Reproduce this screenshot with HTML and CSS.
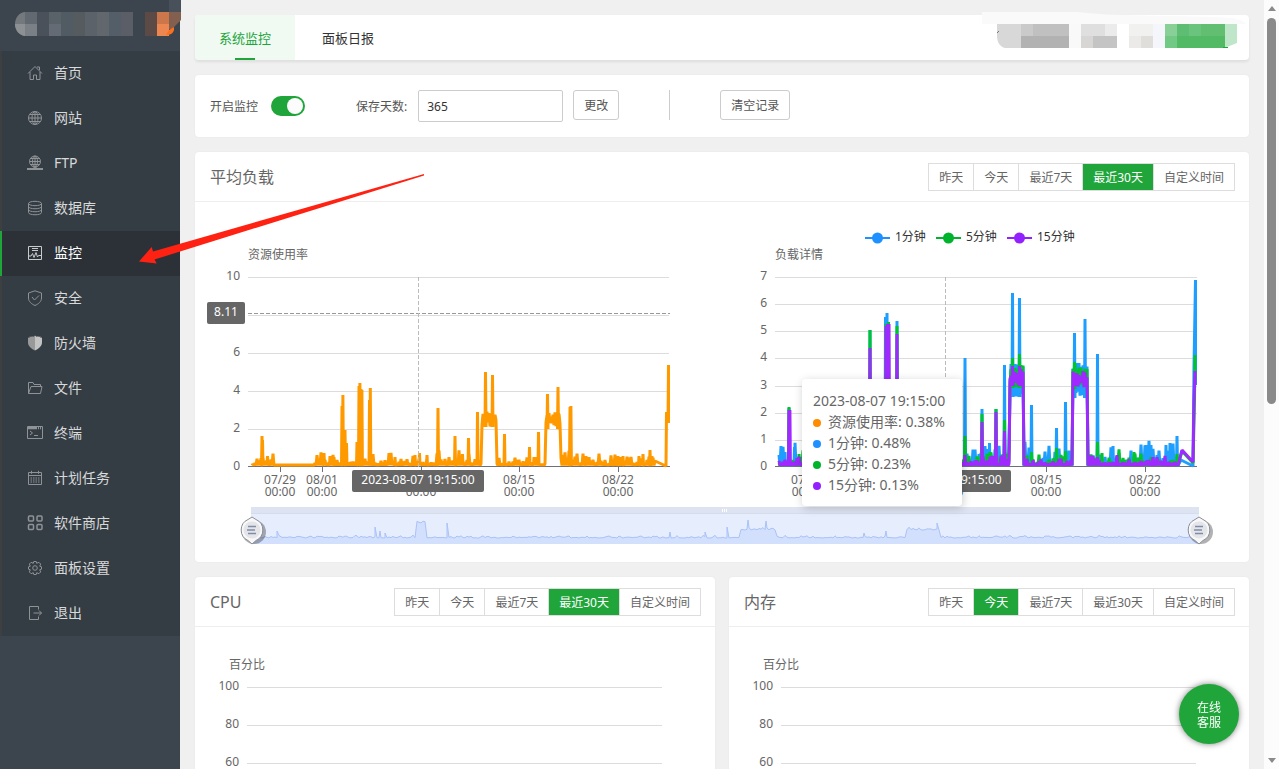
FILE: index.html
```
<!DOCTYPE html>
<html lang="zh-CN">
<head>
    <meta charset="UTF-8">
    <meta name="viewport" content="width=device-width, initial-scale=1.0">
    <title>监控</title>
    <link rel="stylesheet" href="styles.css">
</head>
<body>
    <aside class="sidebar">
        <div class="brand">
            <svg width="181" height="50" viewBox="0 0 181 50">
                <path d="M25 12h8v24h-8c-5 0-10-5-10-12s5-12 10-12z" fill="#74797d"/>
                <path d="M15 24h10v12c-6-1-10-6-10-12z" fill="#8e9193"/>
                <rect x="25" y="12" width="12" height="12" fill="#626970"/>
                <rect x="25" y="24" width="12" height="12" fill="#7b7f86"/>
                <rect x="37" y="12" width="12" height="24" fill="#4a515a"/>
                <rect x="49" y="12" width="12" height="12" fill="#596169"/>
                <rect x="49" y="24" width="12" height="12" fill="#656b74"/>
                <rect x="61" y="12" width="12" height="24" fill="#505b63"/>
                <rect x="73" y="12" width="12" height="24" fill="#555b5e"/>
                <rect x="85" y="12" width="12" height="24" fill="#5b626a"/>
                <rect x="97" y="12" width="12" height="24" fill="#62666d"/>
                <rect x="109" y="12" width="12" height="24" fill="#535e68"/>
                <rect x="121" y="12" width="12" height="24" fill="#5b5d67"/>
                <rect x="145" y="12" width="12" height="24" fill="#5c4a46"/>
                <rect x="157" y="12" width="12" height="12" fill="#cb764b"/>
                <rect x="157" y="24" width="12" height="12" fill="#ec8752"/>
                <path d="M169 0h12v12h-12z" fill="#485059"/>
                <path d="M169 12h12v8l-9 9h-3z" fill="#835f4f"/>
                <path d="M169 30l5-3v3q-1 5-8 5z" fill="#f9701f"/>
            </svg>
        </div>
        <nav class="menu">
            <a class="menu-item" href="#"><svg class="icon" viewBox="0 0 16 16"><path d="M1 8.500L8 1.500l7 7M3 7v7.500h3.500V10h3v4.500H13V7M10 2h2.500v3"/></svg>首页</a>
            <a class="menu-item" href="#"><svg class="icon" viewBox="0 0 16 16"><circle cx="8" cy="8" r="6.500"/><ellipse cx="8" cy="8" rx="3" ry="6.500"/><path d="M8 1.500v13M1.500 8h13M2.500 4.500h11M2.500 11.500h11"/></svg>网站</a>
            <a class="menu-item" href="#"><svg class="icon" viewBox="0 0 16 16"><circle cx="8" cy="6.500" r="5.500"/><ellipse cx="8" cy="6.500" rx="2.500" ry="5.500"/><path d="M8 1v13M2.500 6.500h11M3.500 3.500h9M3.500 9.500h9"/><path d="M0 14h16M6 13.500h4" stroke-width="2"/></svg>FTP</a>
            <a class="menu-item" href="#"><svg class="icon" viewBox="0 0 16 16"><ellipse cx="8" cy="3.500" rx="6.500" ry="2.200"/><path d="M1.500 3.500v9c0 3 13 3 13 0v-9M1.500 6.500c0 3 13 3 13 0M1.500 9.500c0 3 13 3 13 0"/></svg>数据库</a>
            <a class="menu-item active" href="#"><svg class="icon" viewBox="0 0 16 16"><path d="M1.500 1.500h13v13h-13zM1.500 11h2.500l1.500-2.500L7 12.500l2-5 1.500 4.500 1-1.500h3M5 3.500h6M5 5.500h6"/></svg>监控</a>
            <a class="menu-item" href="#"><svg class="icon" viewBox="0 0 16 16"><path d="M8 .8l6.500 2.200v5c0 3.500-3 6-6.500 7.500C4.500 14 1.500 11.500 1.500 8V3zM5 7l2.500 3L12 5.500"/></svg>安全</a>
            <a class="menu-item" href="#"><svg class="icon" viewBox="0 0 16 16"><path class="dark" d="M8 .5v15C4 13.500 1 11 1 7.500V2.500L2.500 3V1.500l2 .5V1.200L6.500 1.700z"/><path class="light" d="M8 .5v15c4-2 7-4.500 7-8V2.500L13.500 3V1.500l-2 .5V1.200L9.500 1.700z"/></svg>防火墙</a>
            <a class="menu-item" href="#"><svg class="icon" viewBox="0 0 16 16"><path d="M1.500 13.500v-11h4.500l1 2h6.500v2M1.500 13.500l2.500-7h11l-1.500 7z"/></svg>文件</a>
            <a class="menu-item" href="#"><svg class="icon" viewBox="0 0 16 16"><path d="M.5 1.500h15v12H.5zM3 6l2.500 2L3 10M7 10.500h4"/><path d="M1 3h14" stroke-width="2.500" stroke-dasharray="9 1 1 1 1 1"/></svg>终端</a>
            <a class="menu-item" href="#"><svg class="icon" viewBox="0 0 16 16"><path d="M1.500 2.500h13v12h-13zM1.500 5.500h13M4.500.8v3M11.500.8v3"/><path d="M3.500 8h9M3.500 10h9M3.500 12h9" stroke-dasharray="1.500 1"/></svg>计划任务</a>
            <a class="menu-item" href="#"><svg class="icon thick" viewBox="0 0 16 16"><rect x="1.500" y="1" width="5" height="5" rx="1"/><rect x="10" y="1" width="5" height="5" rx="1"/><rect x="1.500" y="9.500" width="5" height="5" rx="1"/><rect x="10" y="9.500" width="5" height="5" rx="1"/></svg>软件商店</a>
            <a class="menu-item" href="#"><svg class="icon" viewBox="0 0 16 16"><path d="M6.800 1.500h2.400l.5 1.800 2.200-1 1.800 1.800-1 2.100 1.800.6v2.400l-1.800.6 1 2.100-1.800 1.800-2.200-1-.5 1.800H6.800l-.5-1.800-2.200 1-1.800-1.800 1-2.100-1.800-.6V6.800l1.800-.6-1-2.100 1.800-1.800 2.200 1z"/><circle cx="8" cy="8" r="2.300"/></svg>面板设置</a>
            <a class="menu-item" href="#"><svg class="icon" viewBox="0 0 16 16"><path d="M11.500 4.500v-3h-9v13h9v-3M6.500 8h8M12 5.500L14.500 8 12 10.500"/></svg>退出</a>
        </nav>
    </aside>

    <main class="main">
        <div class="card tabs">
            <button class="tab active">系统监控</button>
            <button class="tab">面板日报</button>
            <svg class="account" width="268" height="48" viewBox="981 12 268 48">
                <path d="M982 12h95c40 5 110 3 155 6q12 2 14 6H982z" fill="#fafafa"/>
                <path d="M997 24h24v24h-16c-5-1-8-6-8-12z" fill="#d8d8d8"/>
                <rect x="1021" y="24" width="12" height="12" fill="#cacaca"/>
                <rect x="1033" y="24" width="36" height="12" fill="#c0c0c0"/>
                <rect x="1021" y="36" width="48" height="12" fill="#b2b2b2"/>
                <path d="M997 33l2-2" stroke="#777"/>
                <rect x="1069" y="24" width="12" height="24" fill="#f9f9f9"/>
                <rect x="1081" y="24" width="24" height="12" fill="#dfdfdf"/>
                <rect x="1105" y="24" width="12" height="12" fill="#ebebeb"/>
                <rect x="1081" y="36" width="12" height="12" fill="#d8d6d4"/>
                <rect x="1093" y="36" width="24" height="12" fill="#c4c4c4"/>
                <rect x="1129" y="24" width="24" height="12" fill="#f1f1f0"/>
                <rect x="1129" y="36" width="12" height="12" fill="#eceae8"/>
                <rect x="1141" y="36" width="12" height="12" fill="#e0deda"/>
                <rect x="1153" y="24" width="12" height="24" fill="#f4f6fb"/>
                <rect x="1165" y="24" width="12" height="12" fill="#88d098"/>
                <rect x="1165" y="36" width="12" height="12" fill="#72c986"/>
                <rect x="1177" y="24" width="12" height="12" fill="#5dbe73"/>
                <rect x="1189" y="24" width="12" height="12" fill="#6bc47e"/>
                <rect x="1201" y="24" width="24" height="12" fill="#62bf72"/>
                <rect x="1177" y="36" width="48" height="12" fill="#52b965"/>
                <path d="M1225 24h12v19l-10 4h-2z" fill="#bfe6c8"/>
                <path d="M1223 47.500h5" stroke="#20a53a"/>
            </svg>
        </div>

        <div class="card toolbar">
            <label class="text" for="monitor-on">开启监控</label>
            <input class="switch" type="checkbox" id="monitor-on" checked>
            <label class="text days-label" for="days">保存天数:</label>
            <input class="days" type="text" id="days" value="365">
            <button class="btn">更改</button>
            <span class="divider"></span>
            <button class="btn">清空记录</button>
        </div>

        <section class="card">
            <header class="card-head">
                <h2>平均负载</h2>
                <div class="period">
                    <button>昨天</button>
                    <button>今天</button>
                    <button>最近7天</button>
                    <button class="active">最近30天</button>
                    <button>自定义时间</button>
                </div>
            </header>
            <div class="chart-wrap">
                <svg class="chart" id="load-chart" viewBox="195 202 1054 360"></svg>
                <div class="tooltip">
                    <div>2023-08-07 19:15:00</div>
                    <div><i class="dot orange"></i>资源使用率: 0.38%</div>
                    <div><i class="dot blue"></i>1分钟: 0.48%</div>
                    <div><i class="dot green"></i>5分钟: 0.23%</div>
                    <div><i class="dot purple"></i>15分钟: 0.13%</div>
                </div>
            </div>
        </section>

        <div class="row">
            <section class="card">
                <header class="card-head">
                    <h2>CPU</h2>
                    <div class="period">
                        <button>昨天</button>
                        <button>今天</button>
                        <button>最近7天</button>
                        <button class="active">最近30天</button>
                        <button>自定义时间</button>
                    </div>
                </header>
                <svg class="chart" id="cpu-chart" viewBox="195 627 520 280"></svg>
            </section>
            <section class="card">
                <header class="card-head">
                    <h2>内存</h2>
                    <div class="period">
                        <button>昨天</button>
                        <button class="active">今天</button>
                        <button>最近7天</button>
                        <button>最近30天</button>
                        <button>自定义时间</button>
                    </div>
                </header>
                <svg class="chart" id="mem-chart" viewBox="729 627 520 280"></svg>
            </section>
        </div>
    </main>

    <div class="scrollbar">
        <span class="arrow up"></span>
        <span class="thumb"></span>
        <span class="arrow down"></span>
    </div>

    <button class="service">在线<br>客服</button>

    <svg class="pointer" width="290" height="94" viewBox="137 172 290 94">
        <path d="M424 174L153 251.500l-1.300-4.500L139 261.500l17.700 2-2.200-4L424 175.500z" fill="#ff2213"/>
    </svg>

    <script src="charts.js"></script>
</body>
</html>
```

FILE: styles.css
```
* {
    box-sizing: border-box;
}
body {
    display: flex;
    height: 100vh;
    margin: 0;
    overflow: hidden;
    background: #f0f0f0;
    color: #555;
    font-family: "Noto Sans", "Noto Sans CJK SC", sans-serif;
    font-size: 12px;
}
button,
input {
    font: inherit;
    color: inherit;
}
button {
    cursor: pointer;
}

/* sidebar */
.sidebar {
    flex: 0 0 180px;
    min-width: 0;
    background: #3c444d;
}
.brand {
    height: 51px;
}
.brand svg {
    display: block;
}
.menu {
    background: #353d44;
}
.menu-item {
    display: flex;
    align-items: center;
    gap: 11px;
    height: 45px;
    padding-left: 25px;
    padding-bottom: 3px;
    border-left: 2px solid #3d3f40;
    color: #d8d9da;
    font-size: 14px;
    text-decoration: none;
}
.menu-item.active {
    background: #2c3138;
    border-left-color: #20a53a;
    color: #fff;
}
.icon {
    width: 16px;
    height: 16px;
    margin-top: 2px;
    fill: none;
    stroke: #8f9396;
    stroke-width: 1;
}
.icon.thick {
    stroke-width: 1.5;
}
.icon .dark {
    fill: #999;
    stroke: none;
}
.icon .light {
    fill: #c3c3c3;
    stroke: none;
}
.active .icon {
    stroke: #c8cacc;
}

/* content */
.main {
    flex: 1;
    display: flex;
    flex-direction: column;
    gap: 15px;
    min-width: 0;
    padding: 15px;
}
.card {
    flex: 1;
    background: #fff;
    border-radius: 4px;
    box-shadow: 0 0 2px rgba(0, 0, 0, 0.06);
}
.main > .card {
    flex: none;
}
.row {
    display: flex;
    gap: 14px;
}

.tabs {
    display: flex;
    align-items: flex-end;
    gap: 3px;
    height: 45px;
    box-shadow: 0 2px 3px rgba(0, 0, 0, 0.08);
}
.tab {
    position: relative;
    height: 45px;
    padding: 0 24px;
    border: none;
    border-radius: 4px 0 0 4px;
    background: none;
    color: #333;
    font-size: 13px;
}
.tab.active {
    background: #f0f9f2;
    color: #20a53a;
}
.tab.active::after {
    content: "";
    position: absolute;
    left: 40px;
    bottom: 0;
    width: 20px;
    height: 2px;
    background: #20a53a;
}
.account {
    margin-left: auto;
}

.toolbar {
    display: flex;
    align-items: flex-start;
    height: 62px;
    padding: 15px;
}
.text {
    line-height: 34px;
}
.switch {
    appearance: none;
    width: 34px;
    height: 20px;
    margin: 6px 51px 0 13px;
    padding: 2px;
    border-radius: 10px;
    background: #20a53a;
}
.switch::before {
    content: "";
    display: block;
    width: 16px;
    height: 16px;
    margin-left: 14px;
    border-radius: 50%;
    background: #fcfcfc;
}
.days-label {
    margin-right: 11px;
}
.days {
    width: 145px;
    height: 32px;
    margin-right: 10px;
    padding: 0 8px;
    border: 1px solid #ccc;
    border-radius: 2px;
    color: #333;
}
.btn {
    height: 30px;
    padding: 0 10px;
    border: 1px solid #ccc;
    border-radius: 3px;
    background: #fff;
}
.divider {
    width: 1px;
    height: 30px;
    margin: 0 50px;
    background: #ccc;
}

.card-head {
    display: flex;
    align-items: flex-start;
    justify-content: space-between;
    height: 50px;
    padding: 0 14px 0 15px;
    border-bottom: 1px solid #eee;
}
h2 {
    margin: 0;
    color: #666;
    font-size: 16px;
    font-weight: normal;
    line-height: 50px;
}
.period {
    display: flex;
    margin-top: 11px;
    border: 1px solid #ddd;
}
.period button {
    height: 26px;
    padding: 0 10px;
    border: none;
    border-right: 1px solid #ddd;
    background: #fff;
    color: #666;
}
.period button:last-child {
    border-right: none;
}
.period .active {
    background: #20a53a;
    color: #fff;
}

/* charts */
.chart-wrap {
    position: relative;
}
.chart {
    display: block;
    width: 100%;
    fill: #666;
    font-size: 12px;
}
.grid {
    stroke: #dcdcdc;
}
.axis {
    stroke: #6e7079;
}
.cross {
    stroke: #999;
    stroke-dasharray: 4 2;
}
.cross.light {
    stroke: #bbb;
}
.line {
    fill: none;
    stroke-width: 3;
    stroke-linejoin: bevel;
}
.badge {
    fill: #666;
}
.badge-text {
    fill: #fff;
}
.legend-text {
    fill: #333;
}
.tooltip {
    position: absolute;
    left: 607px;
    top: 177px;
    width: 160px;
    padding: 11px;
    border-radius: 4px;
    background: #fff;
    box-shadow: 1px 2px 10px rgba(0, 0, 0, 0.2);
    color: #666;
    font-size: 14px;
    line-height: 21px;
    white-space: nowrap;
}
.dot {
    display: inline-block;
    width: 8px;
    height: 8px;
    margin-right: 7px;
    border-radius: 50%;
}
.dot.orange {
    background: #ff8c00;
}
.dot.blue {
    background: #1e90ff;
}
.dot.green {
    background: #00b32d;
}
.dot.purple {
    background: #9321ff;
}

/* window scrollbar */
.scrollbar {
    flex: 0 0 15px;
    display: flex;
    flex-direction: column;
    align-items: center;
    padding: 6px 0;
    background: #fcfcfc;
}
.arrow {
    border: 4px solid transparent;
}
.arrow.up {
    border-top: none;
    border-bottom: 5px solid #8a8a8a;
}
.arrow.down {
    margin-top: auto;
    border-bottom: none;
    border-top: 5px solid #8a8a8a;
}
.thumb {
    width: 9px;
    height: 51%;
    margin-top: 7px;
    border-radius: 5px;
    background: #8a8a8a;
}

.service {
    position: fixed;
    right: 40px;
    bottom: 25px;
    width: 60px;
    height: 60px;
    padding: 2px 0 0;
    border: none;
    border-radius: 50%;
    background: #20a53a;
    box-shadow: 0 0 6px rgba(0, 0, 0, 0.5);
    color: #fff;
    line-height: 15px;
}
.pointer {
    position: absolute;
    left: 137px;
    top: 172px;
    pointer-events: none;
}
```

FILE: charts.js
```
let seed = 7;
function random() {
    seed = (seed * 16807) % 2147483647;
    return seed / 2147483647;
}

function line(x1, y1, x2, y2, cls) {
    return `<line class="${cls}" x1="${x1}" y1="${y1}" x2="${x2}" y2="${y2}"/>`;
}

function text(x, y, str, anchor = "middle", cls = "") {
    return `<text class="${cls}" x="${x}" y="${y}" text-anchor="${anchor}">${str}</text>`;
}

function badge(x, y, width, str) {
    return `<rect class="badge" x="${x}" y="${y}" width="${width}" height="22" rx="2"/>` +
        text(x + width / 2, y + 14, str, "middle", "badge-text");
}

// peaks: [x, y], blocks: [from, to, top, bottom], quiet: [from, to]
function series(s, color) {
    const points = [];
    const base = 465;
    for (let x = s.from; x < s.to; x += 1) {
        const block = s.blocks.find(b => x >= b[0] && x <= b[1]);
        if (block) {
            const y = x % 2 ? block[2] + random() * 7 : block[3] - random() * 7;
            points.push([x, y]);
        } else if (s.quiet && x > s.quiet[0] && x < s.quiet[1]) {
            points.push([x, base]);
        } else {
            points.push([x, x % 2 ? base - random() * random() * s.noise - 1 : base + 0.5]);
        }
        s.peaks.filter(p => p[0] >= x && p[0] < x + 1).forEach(p => {
            const foot = block ? block[3] : base;
            points.push([p[0] - 0.5, foot], [p[0], p[1]], [p[0] + 0.5, foot]);
        });
    }
    const d = points.concat(s.tail).map(p => p[0].toFixed(1) + " " + p[1].toFixed(1)).join("L");
    return `<path class="line" stroke="${color}" d="M${d}"/>`;
}

function timeAxis(left, right, shift) {
    let out = line(left, 466.5, right, 466.5, "axis");
    const ticks = [[280, "07/29"], [322, "08/01"], [421, "08/08"], [519, "08/15"], [618, "08/22"]];
    ticks.forEach(([x, day]) => {
        out += line(x + shift + 0.5, 467, x + shift + 0.5, 472, "axis");
        if (day !== "08/08") {
            out += text(x + shift, 484, day);
        }
        out += text(x + shift, 496, "00:00");
    });
    return out;
}

const usage = {
    from: 252, to: 655, noise: 14, quiet: [274, 314],
    peaks: [[262, 436], [262.5, 440], [267.5, 456], [324, 453], [330, 456], [334, 457], [342, 406], [342.9, 395], [345, 430], [346.5, 443],
        [357, 442], [359, 386], [359.9, 383], [361, 389], [361.9, 390], [369.5, 400], [370.3, 388], [395, 457], [415, 455], [419.5, 453],
        [427, 455], [438, 408], [455, 436], [462.5, 454], [468.5, 438], [477.5, 412], [485.5, 372], [492.5, 375], [504.5, 434],
        [529.5, 447], [534, 457], [538.5, 432], [547.5, 394], [558, 387], [570, 407], [570.9, 406], [586, 456], [618, 456], [623, 456],
        [639, 456], [643, 454], [650, 450], [652, 456]],
    blocks: [[482, 496, 410, 427], [546, 560, 410, 429]],
    tail: [[655, 461], [666, 466], [666.5, 412], [668, 422], [668.5, 365], [668.5, 423]]
};

const load1 = {
    from: 779, to: 1179, noise: 26,
    peaks: [[785, 452], [789, 408], [794.5, 447], [870, 330], [885.5, 317], [887, 313], [888.5, 322], [897, 321], [965, 358],
        [982, 409], [989.5, 443], [996, 409], [1004.5, 365], [1012.5, 293], [1019.5, 298], [1031.5, 405], [1056.5, 428], [1065.5, 402],
        [1074.5, 333], [1085, 319], [1097.5, 354], [1113, 446], [1119, 453], [1146, 445], [1151, 445], [1166, 445], [1170, 443], [1177, 436]],
    blocks: [[1010, 1023, 362, 397], [1073, 1087, 362, 398]],
    tail: [[1181, 460], [1193, 466], [1194, 366], [1195.5, 280], [1195.5, 385]]
};

const load5 = {
    from: 779, to: 1179, noise: 16,
    peaks: [[789, 407], [799, 454], [870, 330], [886, 324], [888.5, 322], [897, 326], [965, 436], [982, 414], [990, 452], [996, 409],
        [1004.5, 420], [1012.5, 358], [1019.5, 354], [1031.5, 452], [1056.5, 448], [1065.5, 451], [1074.5, 362], [1097.5, 442],
        [1102, 453], [1134, 452], [1177, 454]],
    blocks: [[1010, 1023, 364, 388], [1073, 1087, 364, 389]],
    tail: [[1182, 451], [1193, 463], [1194.5, 400], [1195, 355], [1195, 380]]
};

const load15 = {
    from: 779, to: 1179, noise: 10,
    peaks: [[789, 410], [789.9, 410], [870, 348], [886, 326], [887.5, 324], [889, 324], [897, 334], [965, 455], [982, 422], [990, 457],
        [996, 412], [1004.5, 431], [1012.5, 366], [1019.5, 366], [1097.5, 457]],
    blocks: [[1010, 1023, 369, 386], [1073, 1087, 371, 388]],
    tail: [[1182, 450], [1193, 462], [1194, 400], [1195, 371], [1195, 385]]
};

function overview() {
    const peaks = [[277, 531], [375, 527], [380, 531], [385, 533], [447, 523], [670, 532], [705, 532], [727, 527],
        [748, 520], [766, 521], [864, 533], [886, 531], [937, 523]];
    const blocks = [[417, 425, 523], [741, 775, 530], [907, 940, 530]];
    const points = [];
    for (let x = 251; x <= 1199; x += 2) {
        const block = blocks.find(b => x >= b[0] && x <= b[1]);
        points.push([x, (block ? block[2] : 538) - random() * random() * 3]);
        peaks.filter(p => p[0] >= x && p[0] < x + 2).forEach(p => points.push(p));
    }
    const d = points.map(p => p[0] + " " + p[1].toFixed(1)).join("L");
    return `<rect x="251" y="507" width="948" height="37" fill="#e6edfd"/>
        <rect x="251" y="507" width="948" height="6" fill="#dde3f1"/>
        <path d="M251 513.500h948" stroke="#d5dcec"/>
        <path d="M251 544L${d}L1199 544z" fill="#d3e0fd"/>
        <path d="M${d}" fill="none" stroke="#a9c2f8"/>
        <path d="M722.500 509v3M724.500 509v3M726.500 509v3" stroke="#fff"/>
        ${handle(252)}${handle(1199)}`;
}

function handle(x) {
    return `<g transform="translate(${x} 530)">
        <circle cx="2" cy="2" r="12" fill="#000" opacity="0.3"/>
        <path d="M0-13l4 2.500a11.500 11.500 0 0 1 0 21L0 14l-4-3.500a11.500 11.500 0 0 1 0-21z" fill="#f8f8f8" stroke="#8a8e99"/>
        <circle r="8.500" fill="#e4e5e8"/>
        <path d="M-4-3.500h8M-5 0h8M-4 3.500h8" stroke="#7f8da8" stroke-width="1.500"/>
    </g>`;
}

function legend(x, color, label) {
    return `<path d="M${x} 238h25" stroke="${color}" stroke-width="2"/>
        <circle cx="${x + 12.5}" cy="238" r="5.500" fill="${color}"/>` +
        text(x + 30, 241, label, "start", "legend-text");
}

function loadChart() {
    let out = text(248, 259, "资源使用率", "start") + text(775, 259, "负载详情", "start");
    out += legend(865, "#1e90ff", "1分钟") + legend(936, "#00b32d", "5分钟") + legend(1007, "#9321ff", "15分钟");
    for (let v = 0; v <= 10; v += 2) {
        const y = 467 - v * 19;
        if (v) {
            out += line(248, y + 0.5, 669, y + 0.5, "grid");
        }
        if (v !== 8) {
            out += text(240, y + 3, v, "end");
        }
    }
    for (let v = 0; v <= 7; v++) {
        const y = Math.round(467 - v * 27.14);
        if (v) {
            out += line(775, y + 0.5, 1197, y + 0.5, "grid");
        }
        out += text(767, y + 3, v, "end");
    }
    out += timeAxis(248, 670, 0) + timeAxis(775, 1197, 527);
    out += series(usage, "#ff9900");
    out += series(load1, "#1e9fff") + series(load5, "#00c42d") + series(load15, "#9f29ff");
    out += line(248, 313.5, 670, 313.5, "cross");
    out += line(418.5, 277, 418.5, 467, "cross light") + line(945.5, 277, 945.5, 467, "cross light");
    out += badge(207, 302, 38, "8.11");
    out += badge(352, 470, 132, "2023-08-07 19:15:00") + badge(879, 470, 132, "2023-08-07 19:15:00");
    return out + overview();
}

function percentChart(shift) {
    let out = text(229 + shift, 669, "百分比", "start");
    for (let v = 100; v >= 0; v -= 20) {
        const y = 687 + (100 - v) * 1.9;
        out += line(247 + shift, y + 0.5, 662 + shift, y + 0.5, "grid");
        out += text(239 + shift, y + 3, v, "end");
    }
    return out;
}

document.getElementById("load-chart").innerHTML = loadChart();
document.getElementById("cpu-chart").innerHTML = percentChart(0);
document.getElementById("mem-chart").innerHTML = percentChart(534);
```
